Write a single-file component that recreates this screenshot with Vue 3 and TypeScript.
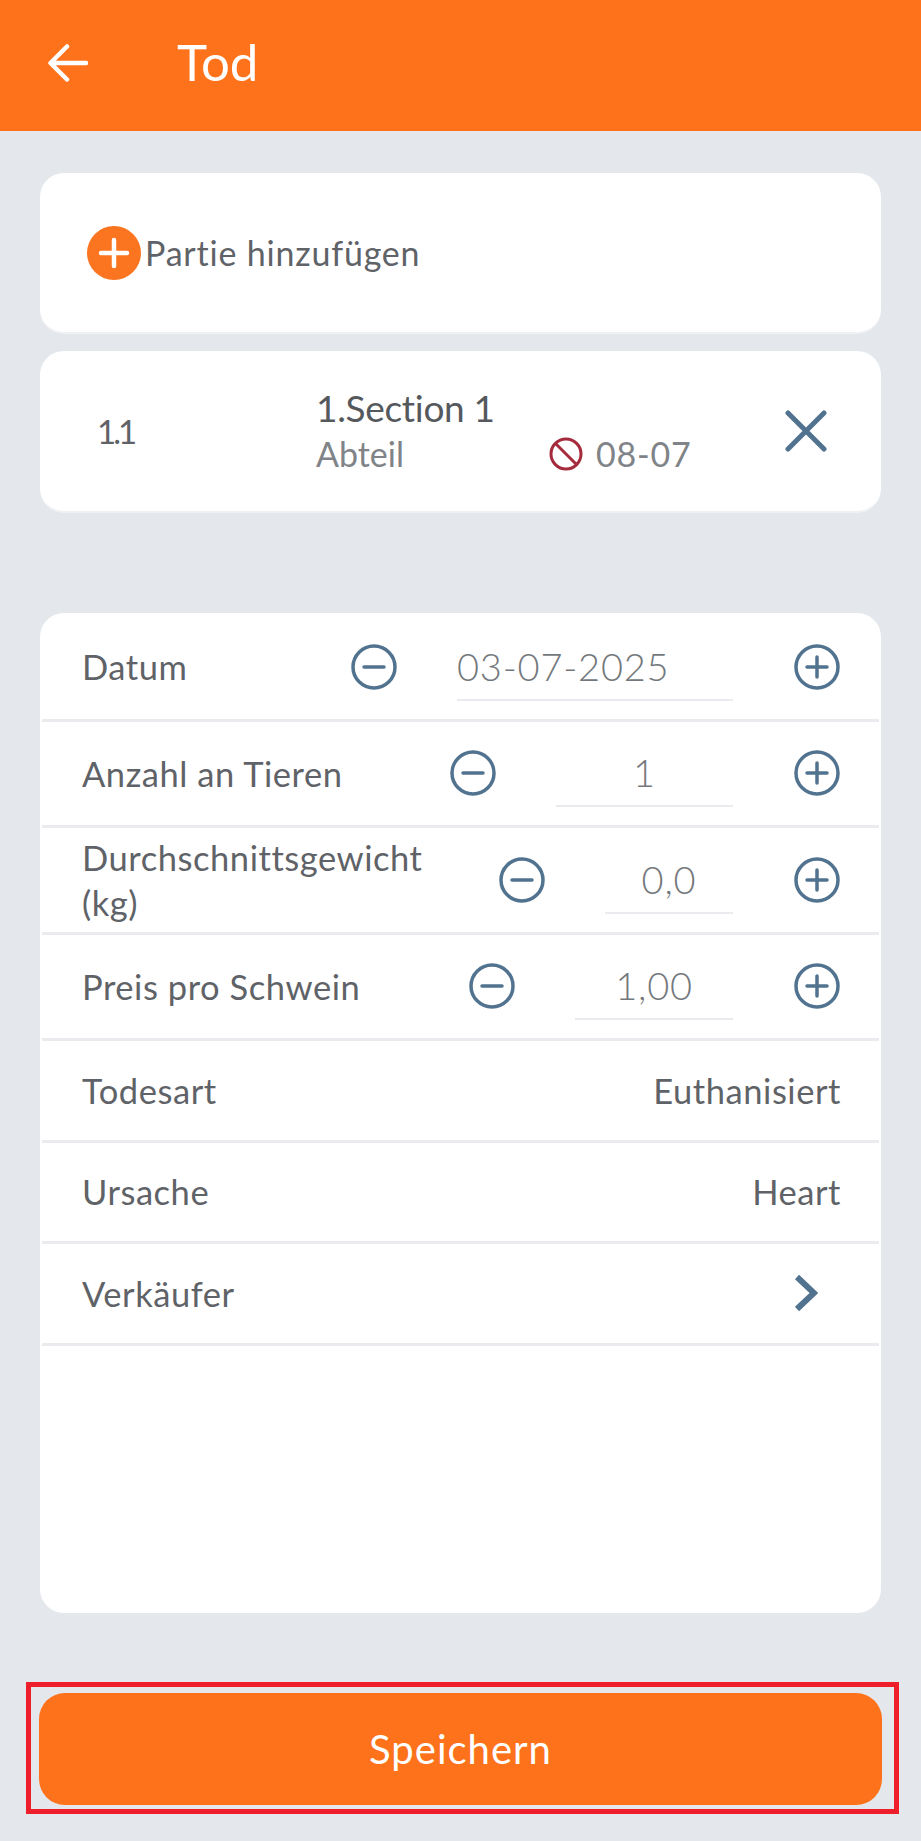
<script setup lang="ts">
interface StepRow {
  label: string
  value: string
  width: number
  isDate?: boolean
}

const stepRows: StepRow[] = [
  { label: 'Datum', value: '03-07-2025', width: 276, isDate: true },
  { label: 'Anzahl an Tieren', value: '1', width: 177 },
  { label: 'Durchschnittsgewicht (kg)', value: '0,0', width: 128 },
  { label: 'Preis pro Schwein', value: '1,00', width: 158 }
]

const textRows = [
  { label: 'Todesart', value: 'Euthanisiert' },
  { label: 'Ursache', value: 'Heart' }
]
</script>

<template>
  <div class="page">
    <header class="topbar">
      <svg class="back" viewBox="0 0 40 38" fill="none" stroke="#fff" stroke-width="4.5" stroke-linecap="round" stroke-linejoin="round">
        <path d="M38 19H3M19 2.5 2.5 19 19 35.5" />
      </svg>
      <h1 class="title">Tod</h1>
    </header>

    <main class="content">
      <section class="card add-card">
        <svg class="add-icon" viewBox="0 0 54 54">
          <circle cx="27" cy="27" r="27" fill="#fb741f" />
          <path d="M27 14v26M14 27h26" stroke="#fff" stroke-width="4.5" stroke-linecap="round" />
        </svg>
        <span class="add-text">Partie hinzufügen</span>
      </section>

      <section class="card batch-card">
        <span class="batch-no">1.1</span>
        <div class="batch-info">
          <div class="batch-name">1.Section 1</div>
          <div class="batch-meta">
            <span>Abteil</span>
            <span class="batch-date">
              <svg class="ban" viewBox="0 0 34 34" fill="none" stroke="#a52a3c" stroke-width="3">
                <circle cx="17" cy="17" r="15" />
                <path d="M6.5 6.5 27.5 27.5" />
              </svg>
              08-07
            </span>
          </div>
        </div>
        <svg class="close" viewBox="0 0 42 42" fill="none" stroke="#527390" stroke-width="5" stroke-linecap="round">
          <path d="M3 3 39 39M39 3 3 39" />
        </svg>
      </section>

      <section class="card form-card">
        <div v-for="row in stepRows" :key="row.label" class="row step-row">
          <span class="label">{{ row.label }}</span>
          <div class="stepper">
            <svg class="round-btn" viewBox="0 0 46 46" fill="none" stroke="#527390" stroke-width="3.5" stroke-linecap="round">
              <circle cx="23" cy="23" r="21" />
              <path d="M13 23h20" />
            </svg>
            <div class="field" :class="{ date: row.isDate }" :style="{ width: row.width + 'px' }">{{ row.value }}</div>
            <svg class="round-btn" viewBox="0 0 46 46" fill="none" stroke="#527390" stroke-width="3.5" stroke-linecap="round">
              <circle cx="23" cy="23" r="21" />
              <path d="M13 23h20M23 13v20" />
            </svg>
          </div>
        </div>
        <div v-for="row in textRows" :key="row.label" class="row plain-row">
          <span class="label">{{ row.label }}</span>
          <span class="value">{{ row.value }}</span>
        </div>
        <div class="row plain-row">
          <span class="label">Verkäufer</span>
          <svg class="chevron" viewBox="0 0 24 38" fill="none" stroke="#527390" stroke-width="6" stroke-linejoin="miter">
            <path d="M3 3 20 19 3 35" />
          </svg>
        </div>
      </section>
    </main>

    <div class="save-box">
      <button class="save" type="button">Speichern</button>
    </div>
  </div>
</template>

<style>
html,
body {
  margin: 0;
  background: #e4e8ed;
}
</style>

<style scoped>
.page {
  display: flex;
  flex-direction: column;
  width: 921px;
  height: 1841px;
  background: #e4e8ed;
  font-family: Lato, "Noto Sans", sans-serif;
  color: #5f6368;
}

.topbar {
  display: flex;
  align-items: center;
  height: 131px;
  padding: 0 0 6px 48px;
  box-sizing: border-box;
  background: #fe721c;
  flex-shrink: 0;
}

.back {
  width: 40px;
  height: 38px;
}

.title {
  margin: 0 0 3px 89px;
  font-size: 51px;
  font-weight: 400;
  color: #fff;
}

.content {
  flex: 1;
  display: flex;
  flex-direction: column;
  min-height: 0;
  padding: 42px 40px 0;
}

.card {
  background: #fff;
  border-radius: 24px;
  box-sizing: border-box;
}

.add-card {
  display: flex;
  align-items: center;
  height: 161px;
  padding-left: 47px;
  border-bottom: 2px solid #f0f1f4;
}

.add-icon {
  width: 54px;
  height: 54px;
}

.add-text {
  margin-left: 4px;
  font-size: 34px;
  letter-spacing: 0.8px;
}

.batch-card {
  display: flex;
  align-items: center;
  height: 162px;
  margin-top: 17px;
  padding-left: 57px;
  border-bottom: 2px solid #f0f1f4;
}

.batch-no {
  width: 219px;
  font-size: 33px;
  letter-spacing: -3px;
}

.batch-info {
  width: 400px;
}

.batch-name {
  font-size: 37px;
  line-height: 46px;
  letter-spacing: -0.3px;
  color: #55595d;
}

.batch-meta {
  display: flex;
  align-items: center;
  font-size: 34px;
  line-height: 46px;
  color: #808488;
}

.batch-date {
  display: flex;
  align-items: center;
  gap: 13px;
  margin-left: 145px;
  letter-spacing: 0.8px;
}

.ban {
  width: 34px;
  height: 34px;
}

.close {
  width: 42px;
  height: 42px;
  margin-left: 69px;
}

.form-card {
  flex: 1;
  margin-top: 100px;
  padding: 2px 2px 0;
}

.row {
  display: flex;
  align-items: center;
  justify-content: space-between;
  box-sizing: border-box;
  padding: 0 39px 0 40px;
  border-bottom: 3px solid #e9ebef;
}

.step-row {
  height: 106.5px;
}

.plain-row {
  height: 101.5px;
}

.label {
  max-width: 360px;
  font-size: 34.5px;
  line-height: 45px;
  letter-spacing: 0.55px;
}

.value {
  margin-right: -1px;
  font-size: 34.5px;
  letter-spacing: 0.55px;
}

.stepper {
  display: flex;
  align-items: center;
  flex-shrink: 0;
}

.round-btn {
  width: 46px;
  height: 46px;
  flex-shrink: 0;
}

.field {
  margin: 0 61px 0 60px;
  padding: 8px 0;
  border-bottom: 2px solid #e9ebef;
  font-size: 38px;
  font-weight: 300;
  line-height: 50px;
  letter-spacing: 0.8px;
  text-align: center;
  color: #74787c;
}

.field.date {
  text-align: left;
}

.chevron {
  width: 24px;
  height: 38px;
  margin-right: 22px;
}

.save-box {
  margin: 69px 22px 27px 26px;
  padding: 6px 12px 4px 8px;
  border: 5px solid #ee1f2b;
  flex-shrink: 0;
}

.save {
  display: block;
  width: 100%;
  height: 112px;
  border: none;
  border-radius: 26px;
  background: #fe721c;
  font-family: inherit;
  font-size: 40px;
  letter-spacing: 1px;
  color: #fff;
}
</style>
